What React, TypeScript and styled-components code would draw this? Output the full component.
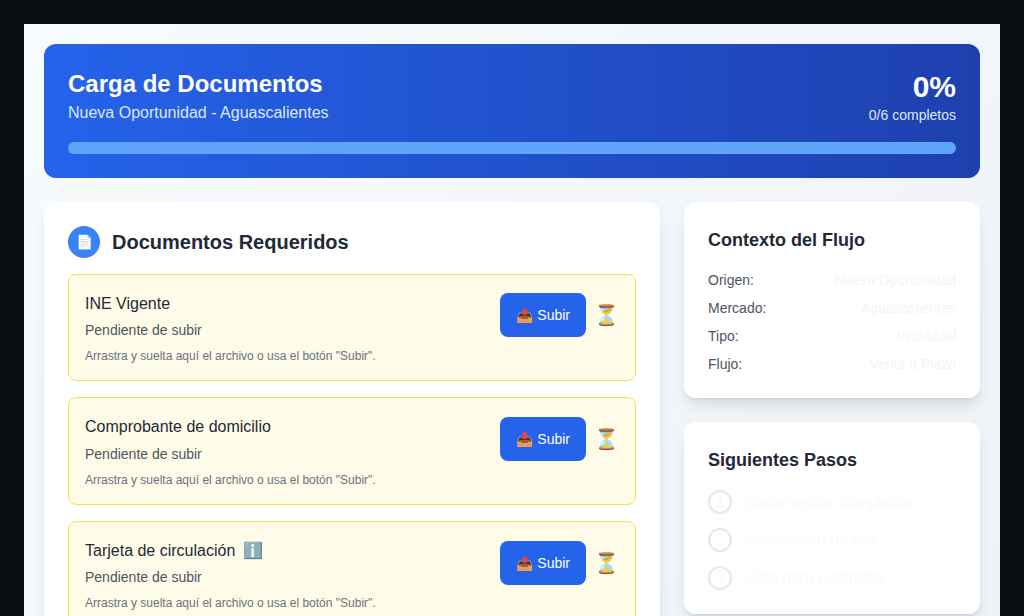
import React from 'react';
import styled, { createGlobalStyle } from 'styled-components';

const Global = createGlobalStyle`
  *, *::before, *::after { box-sizing: border-box; }
  html, body { margin: 0; height: 100%; overflow: hidden; background: #0b0f14; }
  body { font-family: "Liberation Sans", Arial, sans-serif; color: #f3f4f6; font-size: 16px; line-height: 1.6; }
  h1, h2, h3, p, ol, ul { margin: 0; padding: 0; }
  ol, ul { list-style: none; }
`;

const Shell = styled.div`
  height: 616px;
  padding: 24px 24px 0;
  overflow: hidden;
`;

const Page = styled.main`
  height: 1160px;
  padding: 20px;
  background: linear-gradient(135deg, #f7fbfe 0%, #ebeff4 100%);
  display: flex;
  flex-direction: column;
  gap: 24px;
`;

const Hero = styled.header`
  flex-shrink: 0;
  padding: 24px;
  border-radius: 12px;
  color: #fff;
  background: linear-gradient(to right, #2563eb, #1e40af);
`;

const HeroRow = styled.div`
  display: flex;
  justify-content: space-between;
  align-items: center;
  margin-bottom: 16px;
`;

const Title = styled.h1`
  font-size: 24px;
  line-height: 32px;
`;

const Subtitle = styled.p`
  color: #dbeafe;
`;

const Score = styled.div`
  text-align: right;
`;

const Percent = styled.div`
  font-size: 30px;
  line-height: 36px;
  font-weight: 700;
`;

const Count = styled.div`
  font-size: 14px;
  line-height: 20px;
  color: #dbeafe;
`;

const Track = styled.div`
  height: 12px;
  border-radius: 6px;
  background: #60a5fa;
`;

const Columns = styled.div`
  display: grid;
  grid-template-columns: 616px 296px;
  gap: 24px;
  align-items: start;
`;

const Card = styled.section`
  padding: 24px;
  border-radius: 12px;
  background: #fff;
  box-shadow: 0 10px 15px -3px rgba(0, 0, 0, 0.1), 0 4px 6px -4px rgba(0, 0, 0, 0.1);
`;

const SectionHead = styled.div`
  display: flex;
  align-items: center;
  gap: 12px;
  margin-bottom: 16px;
`;

const Badge = styled.span`
  width: 32px;
  height: 32px;
  border-radius: 50%;
  background: #3b82f6;
  display: flex;
  align-items: center;
  justify-content: center;
  font-size: 14px;
  line-height: 20px;
`;

const SectionTitle = styled.h2`
  font-size: 20px;
  line-height: 28px;
  color: #1f2937;
`;

const DocList = styled.ul`
  display: flex;
  flex-direction: column;
  gap: 16px;
`;

const DocItem = styled.li`
  display: flex;
  align-items: flex-start;
  justify-content: space-between;
  padding: 16px;
  border: 1px solid #fde047;
  border-radius: 8px;
  background: #fefce8;
`;

const DocName = styled.h3`
  display: flex;
  gap: 8px;
  font-size: 16px;
  font-weight: 400;
  color: #1f2937;
`;

const DocStatus = styled.p`
  margin-top: 4px;
  font-size: 14px;
  line-height: 20px;
  color: #4b5563;
`;

const DocHint = styled.p`
  margin-top: 8px;
  font-size: 12px;
  line-height: 16px;
  color: #6b7280;
`;

const Actions = styled.div`
  display: flex;
  align-items: center;
  gap: 8px;
  height: 49.6px;
`;

const UploadButton = styled.button`
  height: 44px;
  padding: 0 16px;
  border: 0;
  border-radius: 8px;
  background: #2563eb;
  color: #fff;
  font: 14px/20px "Liberation Sans", Arial, sans-serif;
`;

const Waiting = styled.span`
  font-size: 20px;
  line-height: 28px;
`;

const Side = styled.aside`
  display: grid;
  gap: 24px;
`;

const SideTitle = styled.h2`
  font-size: 18px;
  line-height: 28px;
  margin-bottom: 16px;
  color: #1f2937;
`;

const Facts = styled.div`
  display: grid;
  gap: 8px;
  font-size: 14px;
  line-height: 20px;
`;

const Fact = styled.div`
  display: flex;
  justify-content: space-between;
`;

const Label = styled.span`
  color: #4b5563;
`;

const Steps = styled.ol`
  display: grid;
  gap: 12px;
`;

const Step = styled.li`
  display: flex;
  align-items: center;
  gap: 12px;
  color: #f9fafb;
`;

const StepNumber = styled.span`
  width: 24px;
  height: 24px;
  border: 2px solid #e5e7eb;
  border-radius: 50%;
  display: flex;
  align-items: center;
  justify-content: center;
`;

const documents = [
  { name: 'INE Vigente' },
  { name: 'Comprobante de domicilio' },
  { name: 'Tarjeta de circulación', info: true },
];

const facts = [
  ['Origen:', 'Nueva Oportunidad'],
  ['Mercado:', 'Aguascalientes'],
  ['Tipo:', 'Individual'],
  ['Flujo:', 'Venta a Plazo'],
];

const steps = ['Documentos completos', 'Verificación de voz', 'Listo para contratos'];

export default function App() {
  return (
    <Shell>
      <Global />
      <Page>
        <Hero>
          <HeroRow>
            <div>
              <Title>Carga de Documentos</Title>
              <Subtitle>Nueva Oportunidad - Aguascalientes</Subtitle>
            </div>
            <Score>
              <Percent>0%</Percent>
              <Count>0/6 completos</Count>
            </Score>
          </HeroRow>
          <Track />
        </Hero>
        <Columns>
          <Card>
            <SectionHead>
              <Badge>📄</Badge>
              <SectionTitle>Documentos Requeridos</SectionTitle>
            </SectionHead>
            <DocList>
              {documents.map((doc) => (
                <DocItem key={doc.name}>
                  <div>
                    <DocName>
                      {doc.name}
                      {doc.info && <span>ℹ️</span>}
                    </DocName>
                    <DocStatus>Pendiente de subir</DocStatus>
                    <DocHint>Arrastra y suelta aquí el archivo o usa el botón "Subir".</DocHint>
                  </div>
                  <Actions>
                    <UploadButton>📤 Subir</UploadButton>
                    <Waiting>⏳</Waiting>
                  </Actions>
                </DocItem>
              ))}
            </DocList>
          </Card>
          <Side>
            <Card>
              <SideTitle>Contexto del Flujo</SideTitle>
              <Facts>
                {facts.map(([label, value]) => (
                  <Fact key={label}>
                    <Label>{label}</Label>
                    <span>{value}</span>
                  </Fact>
                ))}
              </Facts>
            </Card>
            <Card>
              <SideTitle>Siguientes Pasos</SideTitle>
              <Steps>
                {steps.map((step, i) => (
                  <Step key={step}>
                    <StepNumber>{i + 1}</StepNumber>
                    <span>{step}</span>
                  </Step>
                ))}
              </Steps>
            </Card>
          </Side>
        </Columns>
      </Page>
    </Shell>
  );
}
